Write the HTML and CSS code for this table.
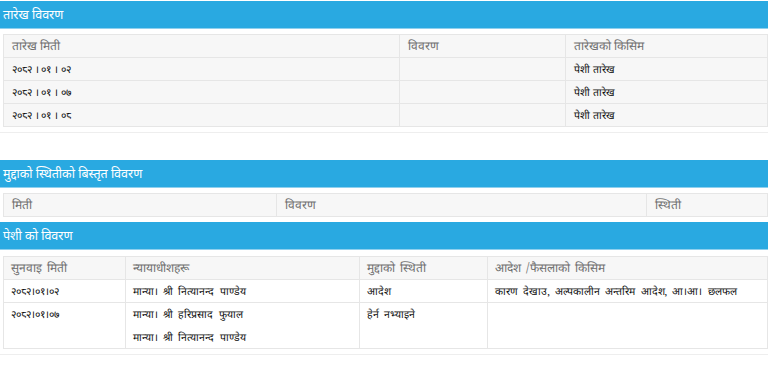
FILE: index.html
```html
<!DOCTYPE html>
<html lang="ne">
<head>
<meta charset="utf-8">
<link rel="stylesheet" href="styles.css">
</head>
<body>
<section class="panel">
  <h2 class="bar">तारेख विवरण</h2>
  <table class="tbl grey t1">
    <thead><tr><th>तारेख मिती</th><th>विवरण</th><th>तारेखको किसिम</th></tr></thead>
    <tbody>
      <tr><td>२०८२ । ०१ । ०२</td><td></td><td>पेशी तारेख</td></tr>
      <tr><td>२०८२ । ०१ । ०७</td><td></td><td>पेशी तारेख</td></tr>
      <tr><td>२०८२ । ०१ । ०८</td><td></td><td>पेशी तारेख</td></tr>
    </tbody>
  </table>
</section>
<section class="panel p2">
  <h2 class="bar">मुद्दाको स्थितीको बिस्तृत विवरण</h2>
  <table class="tbl grey t2">
    <thead><tr><th>मिती</th><th>विवरण</th><th>स्थिती</th></tr></thead>
  </table>
</section>
<section class="panel p3">
  <h2 class="bar">पेशी को विवरण</h2>
  <table class="tbl t3">
    <thead><tr><th>सुनवाइ मिती</th><th>न्यायाधीशहरू</th><th>मुद्दाको स्थिती</th><th>आदेश /फैसलाको किसिम</th></tr></thead>
    <tbody>
      <tr><td>२०८२।०१।०२</td><td>मान्या। श्री नित्यानन्द पाण्डेय</td><td>आदेश</td><td>कारण देखाउ, अल्पकालीन अन्तरिम आदेश, आ।आ। छलफल</td></tr>
      <tr><td>२०८२।०१।०७</td><td><div class="ln">मान्या। श्री हरिप्रसाद फुयाल</div><div class="ln">मान्या। श्री नित्यानन्द पाण्डेय</div></td><td>हेर्न नभ्याइने</td><td></td></tr>
    </tbody>
  </table>
</section>
</body>
</html>
```
FILE: styles.css
```css
html, body { margin: 0; padding: 0; background: #fff; }
body { font-family: "Noto Sans", "DejaVu Sans", sans-serif; width: 768px; overflow: hidden; }
.panel { padding-bottom: 5px; border-bottom: 1px solid #eee; }
.p2 { margin-top: 27px; border-bottom: none; padding-bottom: 0; }
.p3 { border-bottom: 1px solid #eee; }
.bar {
  margin: 0;
  margin-top: 1px;
  height: 27px;
  line-height: 27px;
  padding: 0 3px;
  background: #29a9e1;
  border-bottom: 1px solid #8fd0ee;
  color: #fff;
  font-weight: normal;
  font-size: 12.5px;
  font-family: "Noto Sans", "DejaVu Sans", sans-serif;
}
.tbl {
  margin: 5px 0 0 3px;
  width: 765px;
  border-collapse: collapse;
  font-family: "Noto Serif", "Liberation Serif", serif;
  table-layout: fixed;
}
.tbl th, .tbl td {
  border: 1px solid #e6e6e6;
  text-align: left;
  padding: 0 8px;
  vertical-align: top;
}
.tbl th {
  height: 22px;
  line-height: 22px;
  font-weight: normal;
  font-size: 12px;
  color: #6f6f6f;
  background: #f7f7f7;
}
.tbl td {
  height: 22px;
  line-height: 22px;
  font-size: 10.5px;
  color: #111;
}
.grey td { background: #f7f7f7; }
.t1 th:nth-child(1) { width: 379px; }
.t1 th:nth-child(2) { width: 149px; }
.t2 { margin-top: 5px; }
.t2 th:nth-child(1) { width: 256px; }
.t2 th:nth-child(2) { width: 353px; }
.t3 { margin-top: 6px; }
.t3 th, .t3 td { padding: 0 7px; }
.t3 th { word-spacing: 2px; }
.t3 td { background: #fff; word-spacing: 2.5px; }
.t3 th:nth-child(1) { width: 107px; }
.t3 th:nth-child(2) { width: 219px; }
.t3 th:nth-child(3) { width: 113px; }
.ln { height: 22px; line-height: 22px; }
.t3 tbody tr:last-child td { height: 45px; }
.t3 tbody tr:last-child td .ln + .ln { margin-top: 1px; }
.p2 .tbl { margin-bottom: 5px; }
```
